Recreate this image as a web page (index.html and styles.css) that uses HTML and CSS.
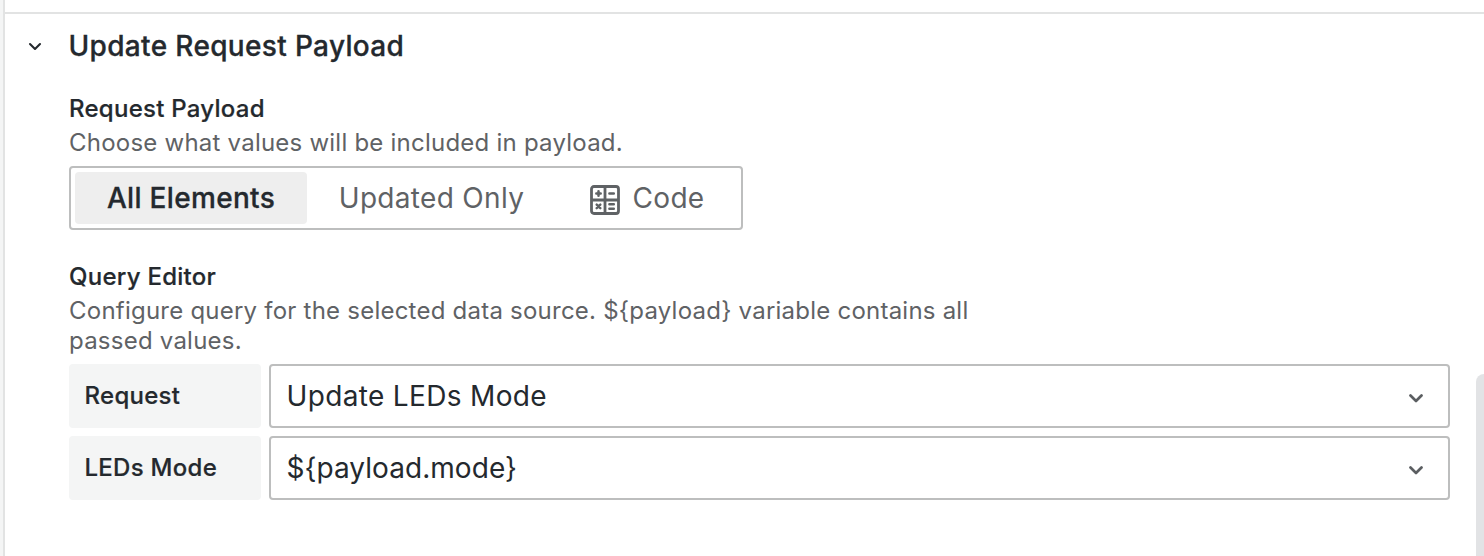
FILE: index.html
```html
<!DOCTYPE html>
<html lang="en">
<head>
<meta charset="utf-8">
<title>Update Request Payload</title>
<link rel="stylesheet" href="styles.css">
</head>
<body>
<main class="pane">
  <header class="section-header">
    <svg class="chevron chevron-title" viewBox="0 0 14 9"><path d="M2 2l5 5 5-5"/></svg>
    <h1 class="section-title">Update Request Payload</h1>
  </header>
  <div class="section-body">
    <section class="field">
      <h2 class="label">Request Payload</h2>
      <p class="description">Choose what values will be included in payload.</p>
      <div class="radio-group">
        <button class="radio radio-active">All Elements</button>
        <button class="radio radio-updated">Updated Only</button>
        <button class="radio radio-code">
          <svg class="code-icon" viewBox="0 0 30 30"><rect x="1.5" y="1.5" width="27" height="27" rx="2.500"/><path d="M15 2v26M2 15h26"/><path class="code-sign" d="M6.300 8.500h4.400M8.500 6.300v4.400M19.400 8.500h4.400M6.700 19.600l3.600 3.600M10.300 19.600l-3.600 3.600M19.400 19.200h4.400M19.400 23.800h4.400"/></svg>
          <span>Code</span>
        </button>
      </div>
    </section>
    <section class="field query">
      <h2 class="label">Query Editor</h2>
      <p class="description">Configure query for the selected data source. ${payload} variable contains all passed values.</p>
      <div class="row">
        <span class="row-label">Request</span>
        <div class="select"><span class="value">Update LEDs Mode</span><svg class="chevron" viewBox="0 0 14 9"><path d="M1.500 1.500l5.500 5.500 5.500-5.500"/></svg></div>
      </div>
      <div class="row">
        <span class="row-label">LEDs Mode</span>
        <div class="select"><span class="value value-variable">${payload.mode}</span><svg class="chevron" viewBox="0 0 14 9"><path d="M1.500 1.500l5.500 5.500 5.500-5.500"/></svg></div>
      </div>
    </section>
  </div>
  <div class="scrollbar"></div>
</main>
</body>
</html>
```
FILE: styles.css
```css
* { box-sizing: border-box; }
body { margin: 0; background: #f4f5f5; font-family: Inter, "Liberation Sans", sans-serif; color: #24292e; }
.pane { position: relative; height: 556px; margin-left: 3px; padding-top: 12px; border-left: 2px solid #e2e3e3; background: #fff; overflow: hidden; }
.section-header { display: flex; align-items: center; height: 68px; padding: 0 0 2px 23px; border-top: 2px solid #e2e3e3; }
.section-title { margin: 0 0 0 26.5px; font-size: 28px; line-height: 32px; font-weight: 500; letter-spacing: .34px; -webkit-text-stroke: .3px currentColor; }
.chevron { width: 14px; height: 9px; margin-top: 4px; fill: none; stroke: #5b5e61; stroke-width: 2.7; stroke-linecap: round; stroke-linejoin: round; }
.chevron-title { margin-top: 0; stroke: #24292e; stroke-width: 2.1; }
.section-body { padding: 14px 34px 0 64px; }
.label { margin: 0; font-size: 24px; line-height: 30px; font-weight: 500; letter-spacing: .26px; -webkit-text-stroke: .2px currentColor; }
.description { max-width: 960px; margin: 4px 0 8px; font-size: 24px; line-height: 30px; color: #5f6265; letter-spacing: .23px; }
.radio-group { display: flex; width: 674px; height: 64px; padding: 4px; border: 2px solid #bdbebe; border-radius: 4px; }
.radio { display: flex; flex: none; align-items: center; justify-content: center; height: 52px; padding: 0; border: 0; border-radius: 4px; background: none; font: 400 28px/32px Inter, sans-serif; letter-spacing: .32px; color: #5f6265; }
.radio-active { width: 232px; background: #eeeeee; color: #24292e; font-weight: 500; -webkit-text-stroke: .3px currentColor; }
.radio-updated { width: 249px; }
.radio-code { width: 182px; gap: 13px; }
.code-icon { width: 30px; height: 30px; margin-top: 4px; fill: none; stroke: #5f6265; stroke-width: 2.8; }
.code-sign { stroke-width: 2.5; stroke-linecap: round; }
.query { margin-top: 32px; }
.row { display: flex; gap: 8px; margin-bottom: 8px; }
.row-label { display: flex; align-items: center; width: 192px; height: 64px; padding: 0 0 2px 15.5px; border-radius: 4px; background: #f4f5f5; font-size: 24px; font-weight: 500; letter-spacing: .28px; -webkit-text-stroke: .2px currentColor; }
.select { display: flex; flex: 1; align-items: center; justify-content: space-between; height: 64px; padding: 0 25px 0 15.5px; border: 2px solid #bdbebe; border-radius: 4px; font-size: 28px; letter-spacing: .34px; }
.value-variable { letter-spacing: .05px; }
.scrollbar { position: absolute; top: 374px; right: 0; width: 8px; height: 190px; border-radius: 8px 0 0; background: #e2e3e5; }
```
